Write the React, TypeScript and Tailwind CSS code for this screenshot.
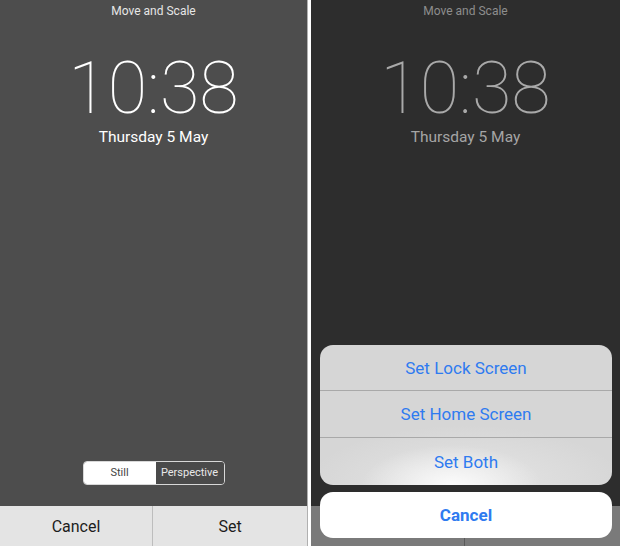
import React from "react";

const sf = { fontFamily: "Roboto, Inter, 'Open Sans', sans-serif" };

function Screen({ dim }: { dim?: boolean }) {
  return (
    <div className="flex flex-col items-center flex-1">
      <div
        className={`mt-[4px] text-[12px] leading-[14px] ${dim ? "text-[#8e8e8e]" : "text-[#e6e6e6]"}`}
        style={sf}
      >
        Move and Scale
      </div>
      <div
        className={`mt-[35px] text-[72px] leading-[72px] ${dim ? "text-[#a9a9a9]" : "text-white"}`}
        style={{ fontFamily: "Roboto, sans-serif", fontWeight: 100 }}
      >
        10:38
      </div>
      <div
        className={`mt-[2px] text-[15.5px] leading-[20px] ${dim ? "text-[#a5a5a5]" : "text-white"}`}
        style={sf}
      >
        Thursday 5 May
      </div>
    </div>
  );
}

export default function App() {
  return (
    <div className="flex w-[620px] h-[546px] bg-white overflow-hidden" style={sf}>
      {/* Left panel */}
      <div className="w-[307px] h-full flex flex-col bg-[#4d4d4d]">
        <Screen />
        <div className="flex justify-center mb-[21px]">
          <div className="flex h-[24px] w-[142px] rounded-[4px] border border-[#d8d8d8] overflow-hidden text-[11px]">
            <div className="w-[72px] bg-white text-[#444] flex items-center justify-center">Still</div>
            <div className="flex-1 bg-[#4a4a4a] text-[#e8e8e8] flex items-center justify-center">Perspective</div>
          </div>
        </div>
        <div className="h-[40px] flex bg-[#e4e4e4] text-[16px] text-[#1c1c1c]">
          <div className="w-[153px] pt-[1px] flex items-center justify-center border-r border-[#bdbdbd]">Cancel</div>
          <div className="flex-1 pt-[1px] flex items-center justify-center">Set</div>
        </div>
      </div>

      {/* Separator */}
      <div className="w-[4px] h-full flex">
        <div className="w-[1px] bg-[#b0b0b0]" />
        <div className="flex-1 bg-white" />
      </div>

      {/* Right panel */}
      <div className="relative w-[309px] h-full flex flex-col bg-[#2d2d2d]">
        <Screen dim />
        <div className="h-[40px] flex bg-[#7a7a7a]">
          <div className="w-[154px] border-r border-[#5a5a5a]" />
          <div className="flex-1" />
        </div>

        {/* Action sheet */}
        <div className="absolute left-[9px] right-[8px] bottom-[8px] flex flex-col gap-[7px] text-[17px] text-[#2f7bf0]">
          <div
            className="rounded-[13px] overflow-hidden flex flex-col bg-[#d6d6d6]"
            style={{
              backgroundImage:
                "radial-gradient(ellipse 90px 40px at 45% 100%, rgba(255,255,255,0.85), rgba(255,255,255,0) 100%), radial-gradient(ellipse 160px 60px at 50% 100%, rgba(240,240,240,0.6), rgba(240,240,240,0) 100%)",
            }}
          >
            <div className="h-[46px] pt-[2px] flex items-center justify-center border-b border-[#a9a9a9]">Set Lock Screen</div>
            <div className="h-[47px] pt-[2px] flex items-center justify-center border-b border-[#a9a9a9]">Set Home Screen</div>
            <div className="h-[47px] pt-[2px] flex items-center justify-center">Set Both</div>
          </div>
          <div className="h-[46px] pt-[2px] rounded-[13px] bg-white flex items-center justify-center font-bold">Cancel</div>
        </div>
      </div>
    </div>
  );
}
